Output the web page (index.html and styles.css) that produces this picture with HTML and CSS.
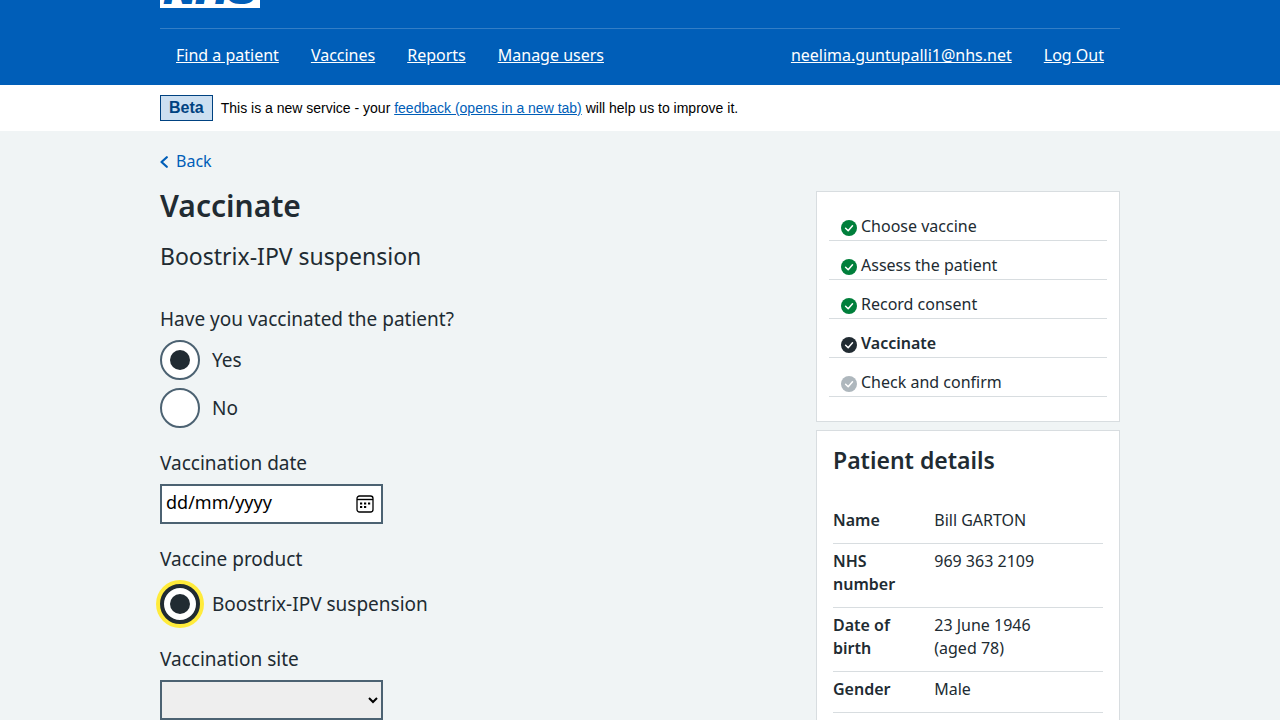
FILE: index.html
```html
<!DOCTYPE html>
<html lang="en-GB">
<head>
<meta charset="utf-8">
<meta name="viewport" content="width=device-width, initial-scale=1">
<title>Vaccinate</title>
<link rel="stylesheet" href="styles.css">
</head>
<body>
<svg class="sprite" aria-hidden="true">
  <symbol id="tick" viewBox="0 0 16 16">
    <circle cx="8" cy="8" r="8" fill="currentColor"/>
    <path d="M4.6 8.2 7.2 10.7 11.5 5.7" fill="none" stroke="#fff" stroke-width="1.5" stroke-linecap="round" stroke-linejoin="round"/>
  </symbol>
</svg>
<header class="header">
  <div class="container">
    <div class="header-top">
      <svg class="logo" viewBox="0 32 100 8" role="img" aria-label="NHS">
        <rect width="100" height="40" fill="#fff"/>
        <text class="logo-text" x="4" y="35">NHS</text>
      </svg>
    </div>
    <nav class="nav" aria-label="Main">
      <ul class="nav-list">
        <li><a href="#">Find a patient</a></li>
        <li><a href="#">Vaccines</a></li>
        <li><a href="#">Reports</a></li>
        <li><a href="#">Manage users</a></li>
      </ul>
      <ul class="nav-list">
        <li><a href="#">neelima.guntupalli1@nhs.net</a></li>
        <li><a href="#">Log Out</a></li>
      </ul>
    </nav>
  </div>
</header>
<div class="phase">
  <div class="container phase-inner">
    <strong class="tag">Beta</strong>
    <span>This is a new service - your <a href="#">feedback (opens in a new tab)</a> will help us to improve it.</span>
  </div>
</div>
<div class="container">
  <a class="back" href="#">
    <svg class="back-icon" viewBox="0 0 8 12" aria-hidden="true"><path d="M6.8 1.2 1.5 6l5.3 4.8" fill="none" stroke="currentColor" stroke-width="2.2" stroke-linecap="round" stroke-linejoin="round"/></svg>
    Back
  </a>
  <div class="columns">
    <main>
      <h1 class="title">Vaccinate</h1>
      <h2 class="subtitle">Boostrix-IPV suspension</h2>
      <form class="form">
        <fieldset class="group">
          <legend class="label">Have you vaccinated the patient?</legend>
          <div class="options">
            <label class="option"><input class="radio" type="radio" name="vaccinated" checked>Yes</label>
            <label class="option"><input class="radio" type="radio" name="vaccinated">No</label>
          </div>
        </fieldset>
        <div class="group">
          <label class="label" for="date">Vaccination date</label>
          <div class="control date">
            <input class="date-input" id="date" type="text" placeholder="dd/mm/yyyy">
            <button class="date-button" type="button" aria-label="Choose date">
              <svg class="date-icon" viewBox="0 0 18 18" aria-hidden="true">
                <rect x="1" y="1" width="16" height="16" rx="2.5" fill="none" stroke="#000" stroke-width="1.3"/>
                <path d="M1 4.5h16" stroke="#000" stroke-width="1.4"/>
                <path d="M4 7.5h2.2v2H4zM8 7.5h2.2v2H8zM12 7.5h2.2v2H12zM4 11h2.2v2H4zM8 11h2.2v2H8z"/>
              </svg>
            </button>
          </div>
        </div>
        <fieldset class="group">
          <legend class="label">Vaccine product</legend>
          <div class="options options-single">
            <label class="option"><input class="radio radio-active" type="radio" name="product" checked>Boostrix-IPV suspension</label>
          </div>
        </fieldset>
        <div class="group">
          <label class="label" for="site">Vaccination site</label>
          <select class="control select" id="site"><option></option></select>
        </div>
      </form>
    </main>
    <aside class="side">
      <section class="card card-steps">
        <ol class="steps">
          <li class="step"><svg class="tick done" aria-hidden="true"><use href="#tick"/></svg>Choose vaccine</li>
          <li class="step"><svg class="tick done" aria-hidden="true"><use href="#tick"/></svg>Assess the patient</li>
          <li class="step"><svg class="tick done" aria-hidden="true"><use href="#tick"/></svg>Record consent</li>
          <li class="step current"><svg class="tick" aria-hidden="true"><use href="#tick"/></svg>Vaccinate</li>
          <li class="step"><svg class="tick todo" aria-hidden="true"><use href="#tick"/></svg>Check and confirm</li>
        </ol>
      </section>
      <section class="card card-details">
        <h2 class="card-title">Patient details</h2>
        <dl class="details">
          <div class="row"><dt>Name</dt><dd>Bill GARTON</dd></div>
          <div class="row"><dt>NHS number</dt><dd>969 363 2109</dd></div>
          <div class="row"><dt>Date of birth</dt><dd>23 June 1946<br>(aged 78)</dd></div>
          <div class="row"><dt>Gender</dt><dd>Male</dd></div>
        </dl>
      </section>
    </aside>
  </div>
</div>
</body>
</html>
```
FILE: styles.css
```css
*, *::before, *::after { box-sizing: border-box; }
body {
  margin: 0;
  background: #f0f4f5;
  color: #212b32;
  font-family: "Noto Sans", "Open Sans", sans-serif;
  font-size: 16px;
  line-height: 24px;
}
h1, h2, ul, ol, dl, dd { margin: 0; padding: 0; }
ul, ol { list-style: none; }
.sprite { display: none; }
.container { max-width: 992px; margin: 0 auto; padding: 0 16px; }

.header { background: #005eb8; }
.header-top { height: 28px; }
.logo { display: block; width: 100px; height: 8px; }
.logo-text {
  font: italic bold 44px "Liberation Sans", Arial, sans-serif;
  fill: #005eb8;
  stroke: #005eb8;
  stroke-width: 2px;
}
.nav {
  display: flex;
  justify-content: space-between;
  border-top: 1px solid #337ec6;
  padding: 14px 16px 18px;
}
.nav-list { display: flex; gap: 32px; }
.nav a { color: #fff; }

.phase {
  background: #fff;
  color: #000;
  font: 14px/20px "Liberation Sans", Arial, sans-serif;
}
.phase-inner { display: flex; align-items: center; gap: 8px; padding-top: 10px; padding-bottom: 10px; }
.phase a { color: #005eb8; }
.tag {
  border: 1px solid #004281;
  background: #ccdff1;
  color: #004281;
  font-size: 16px;
  line-height: 24px;
  padding: 0 8px;
}

.back {
  display: inline-flex;
  align-items: center;
  gap: 8px;
  margin-top: 18px;
  color: #005eb8;
  text-decoration: none;
}
.back-icon { width: 8px; height: 12px; margin-top: 2px; }

.columns { display: grid; grid-template-columns: 2fr 1fr; gap: 48px; margin-top: 17px; }
.title { font-size: 30px; line-height: 40px; font-weight: 600; margin-top: -5px; }
.subtitle { font-size: 23px; line-height: 32px; font-weight: 400; margin-top: 14px; }
.form { display: grid; gap: 21px; margin-top: 33px; }
.group { border: 0; margin: 0; padding: 0; min-width: 0; font-size: 19px; line-height: 28px; }
.label { display: block; padding: 0; margin-bottom: 7px; }
.options { display: grid; gap: 8px; }
.options-single { padding-top: 4px; }
.option { display: flex; align-items: center; gap: 12px; }
.radio {
  appearance: none;
  display: grid;
  place-content: center;
  width: 40px;
  height: 40px;
  margin: 0;
  border: 2px solid #4c6272;
  border-radius: 50%;
  background: #fff;
}
.radio:checked::before {
  content: "";
  width: 20px;
  height: 20px;
  border-radius: 50%;
  background: #212b32;
}
.radio-active { border: 4px solid #212b32; box-shadow: 0 0 0 4px #ffeb3b; }
.control { width: 223px; height: 40px; border: 2px solid #4c6272; }
.date { display: flex; align-items: center; background: #fff; padding: 0 7px 0 4px; }
.date-input {
  flex: 1;
  min-width: 0;
  border: 0;
  padding: 0 0 4px;
  background: none;
  font: inherit;
  font-size: 18px;
}
.date-input::placeholder { color: #000; opacity: 1; }
.date-button { border: 0; background: none; padding: 0; display: flex; }
.date-icon { width: 18px; height: 18px; }
.select { display: block; background: #eee; border-radius: 0; color: #000; }

.side { display: grid; gap: 8px; align-content: start; }
.card { background: #fff; border: 1px solid #d8dde0; }
.card-steps { padding: 10px 12px 24px; }
.step {
  display: flex;
  align-items: center;
  gap: 4px;
  padding: 12px 12px 2px;
  border-bottom: 1px solid #d8dde0;
}
.current { font-weight: 600; }
.tick { width: 16px; height: 16px; margin-top: 3px; }
.done { color: #007f3b; }
.todo { color: #aeb7bd; }
.card-details { padding: 12px 16px 24px; }
.card-title { font-size: 23px; line-height: 34px; font-weight: 600; }
.details { margin-top: 26px; }
.row {
  display: grid;
  grid-template-columns: 3fr 5fr;
  padding: 6px 0 11px;
  border-bottom: 1px solid #d8dde0;
  line-height: 23px;
}
.row dt { font-weight: 600; padding-right: 16px; }
```
